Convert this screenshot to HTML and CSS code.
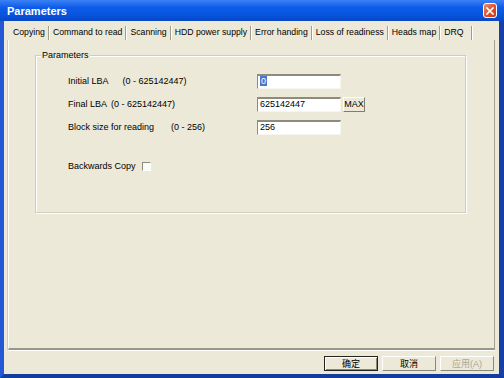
FILE: index.html
```html
<!DOCTYPE html>
<html lang="en">
<head>
  <meta charset="UTF-8" />
  <title>Parameters</title>
  <link rel="stylesheet" href="styles.css">
</head>
<body>
  <div class="window">
    <div class="titlebar">
      <span class="title">Parameters</span>
      <span class="close">
        <svg width="8" height="8" viewBox="0 0 8 8">
          <path d="M1 1 L7 7 M7 1 L1 7" stroke="#fff" stroke-width="1.6" stroke-linecap="square" />
        </svg>
      </span>
    </div>

    <div class="client">
      <div class="tabs">
        <span class="tab active">Copying</span>
        <span class="tab">Command to read</span>
        <span class="tab">Scanning</span>
        <span class="tab">HDD power supply</span>
        <span class="tab">Error handing</span>
        <span class="tab">Loss of readiness</span>
        <span class="tab">Heads map</span>
        <span class="tab last">DRQ</span>
      </div>

      <div class="page">
        <fieldset class="group">
          <legend>Parameters</legend>
          <div class="fields">
            <div class="label">Initial LBA<span class="range r-initial">(0 - 625142447)</span></div>
            <div class="edit"><span class="sel">0</span></div>
            <div></div>

            <div class="label">Final LBA<span class="range r-final">(0 - 625142447)</span></div>
            <div class="edit">625142447</div>
            <div class="small-btn">MAX</div>

            <div class="label">Block size for reading<span class="range r-block">(0 - 256)</span></div>
            <div class="edit">256</div>
            <div></div>
          </div>
          <div class="check-row">
            Backwards Copy <span class="checkbox"></span>
          </div>
        </fieldset>
      </div>

      <div class="buttons">
        <div class="btn default">确定</div>
        <div class="btn">取消</div>
        <div class="btn disabled">应用(A)</div>
      </div>
    </div>
  </div>
</body>
</html>
```

FILE: styles.css
```css
body {
  margin: 0;
  background: #ECE9D8;
  font-family: "Liberation Sans", Arial, "Noto Sans CJK SC", sans-serif;
  font-size: 9px;
  color: #000;
}
.window {
  width: 504px;
  height: 378px;
  display: flex;
  flex-direction: column;
}
.titlebar {
  height: 21px;
  flex: none;
  display: flex;
  align-items: center;
  justify-content: space-between;
  padding: 0 7px;
  background: linear-gradient(#3b82f4, #0e5ce9 35%, #0653dc 75%, #0a46c2);
  color: #fff;
  font-size: 11px;
  font-weight: bold;
}
.close {
  width: 12px;
  height: 13px;
  display: flex;
  align-items: center;
  justify-content: center;
  border: 1px solid #fff;
  border-radius: 3px;
  background: linear-gradient(135deg, #ee8a6a, #d9512c 55%, #c13f1c);
}
.client {
  flex: 1;
  display: flex;
  flex-direction: column;
  border-left: 4px solid #2459d6;
  border-right: 5px solid #163fa8;
  border-bottom: 4px solid #143c9f;
  padding: 0 4px 3px 4px;
}
.tabs {
  height: 19px;
  flex: none;
  display: flex;
  align-items: flex-end;
  padding-left: 2px;
}
.tab {
  height: 14px;
  line-height: 13px;
  padding: 0 3px;
  margin-right: 1px;
  font-size: 8.7px;
  border-right: 1px solid #a09d8c;
  box-shadow: 1px 0 0 #fff;
  white-space: nowrap;
}
.tab.last {
  padding-right: 7px;
}
.page {
  flex: 1;
  border-left: 1px solid #fff;
  border-right: 1px solid #a3a08f;
  border-bottom: 2px solid #9a9787;
  box-shadow: -1px 0 0 #cfccbc, 0 1px 0 #fff;
}
.group {
  margin: 10px 0 0 26px;
  width: 431px;
  height: 163px;
  padding: 0 0 0 5px;
  border: 1px solid #cfcdbd;
  box-shadow: inset 1px 1px 0 #fff, 1px 1px 0 #fff;
  box-sizing: border-box;
}
.group legend {
  padding: 0 1px;
  line-height: 11px;
  background: #ECE9D8;
}
.fields {
  margin: 13px 0 0 27px;
  display: grid;
  grid-template-columns: 187px 84px auto;
  grid-auto-rows: 15px;
  row-gap: 8px;
  column-gap: 2px;
  align-items: center;
}
.label {
  margin-top: -1px;
  white-space: nowrap;
}
.r-initial { margin-left: 14px; }
.r-final { margin-left: 4px; }
.r-block { margin-left: 17px; }
.edit {
  height: 15px;
  box-sizing: border-box;
  border: 1px solid;
  border-top-width: 2px;
  border-color: #8d8b7d #f6f5f0 #f6f5f0 #8d8b7d;
  background: #fff;
  padding-left: 2px;
  line-height: 11px;
}
.sel {
  background: #4a78c8;
  color: #fff;
  padding: 0 1px;
}
.small-btn {
  width: 22px;
  height: 15px;
  box-sizing: border-box;
  border: 1px solid;
  border-color: #fff #7f7d6f #7f7d6f #fff;
  text-align: center;
  line-height: 13px;
}
.check-row {
  margin: 25px 0 0 27px;
  display: flex;
  align-items: center;
  line-height: 12px;
}
.checkbox {
  width: 9px;
  height: 9px;
  box-sizing: border-box;
  margin-left: 6px;
  border: 1px solid;
  border-color: #8d8b7d #fff #fff #8d8b7d;
  background: #fbfbf8;
}
.buttons {
  flex: none;
  display: flex;
  justify-content: flex-end;
  gap: 4px;
  margin: 6px 1px 0 0;
}
.btn {
  width: 54px;
  height: 15px;
  box-sizing: border-box;
  border: 1px solid;
  border-color: #fff #8a8878 #8a8878 #fff;
  display: flex;
  align-items: center;
  justify-content: center;
  font-size: 9px;
}
.btn.default {
  border-color: #222;
  box-shadow: inset 1px 1px 0 #fff, inset -1px -1px 0 #8a8878;
}
.btn.disabled {
  color: #aaa796;
}
```
